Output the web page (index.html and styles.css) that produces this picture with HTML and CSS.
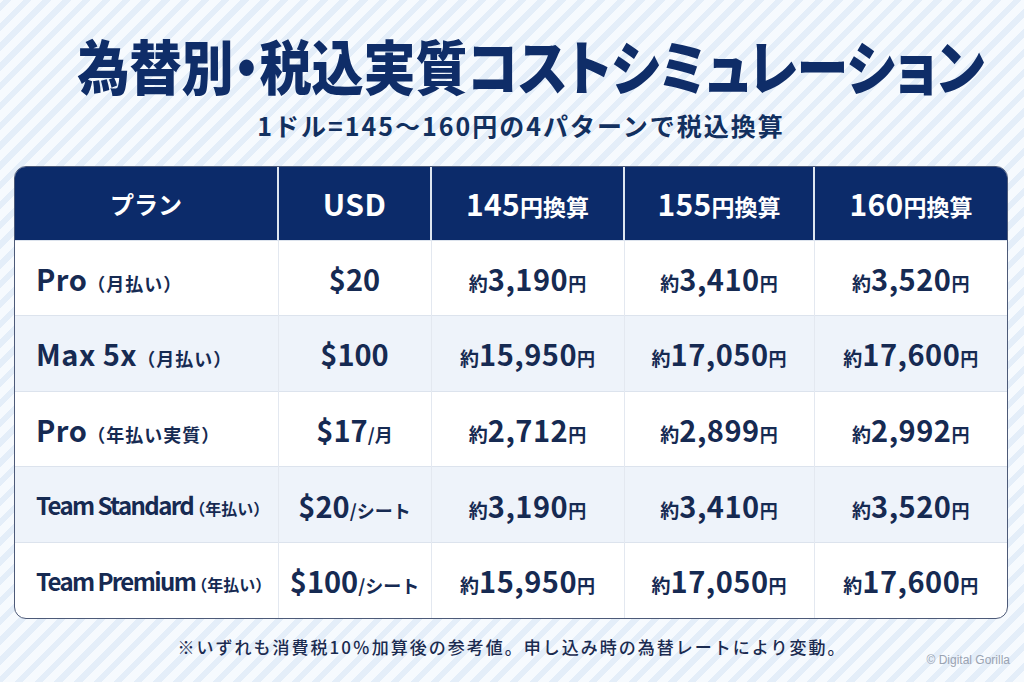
FILE: index.html
```html
<!DOCTYPE html>
<html lang="ja">
<head>
<meta charset="utf-8">
<title>為替別・税込実質コストシミュレーション</title>
<link rel="stylesheet" href="styles.css">
</head>
<body>
<div class="page">
  <header class="head">
    <h1 class="title">為替別・税込実質コストシミュレーション</h1>
    <p class="subtitle">1ドル=145〜160円の4パターンで税込換算</p>
  </header>
  <div class="table-wrap">
    <table class="sim">
      <colgroup>
        <col class="c-plan"><col class="c-usd"><col class="c-145"><col class="c-155"><col class="c-160">
      </colgroup>
      <thead>
        <tr>
          <th class="plan-h">プラン</th>
          <th class="usd-h">USD</th>
          <th><span class="hn">145</span><span class="hj">円換算</span></th>
          <th><span class="hn">155</span><span class="hj">円換算</span></th>
          <th><span class="hn">160</span><span class="hj">円換算</span></th>
        </tr>
      </thead>
      <tbody>
        <tr>
          <td class="plan"><span class="pn">Pro</span><span class="pj">（月払い）</span></td>
          <td class="usd">$20</td>
          <td class="yen"><span class="ya">約</span><span class="yn">3,190</span><span class="yy">円</span></td>
          <td class="yen"><span class="ya">約</span><span class="yn">3,410</span><span class="yy">円</span></td>
          <td class="yen"><span class="ya">約</span><span class="yn">3,520</span><span class="yy">円</span></td>
        </tr>
        <tr class="alt">
          <td class="plan"><span class="pn">Max 5x</span><span class="pj">（月払い）</span></td>
          <td class="usd">$100</td>
          <td class="yen"><span class="ya">約</span><span class="yn">15,950</span><span class="yy">円</span></td>
          <td class="yen"><span class="ya">約</span><span class="yn">17,050</span><span class="yy">円</span></td>
          <td class="yen"><span class="ya">約</span><span class="yn">17,600</span><span class="yy">円</span></td>
        </tr>
        <tr>
          <td class="plan"><span class="pn">Pro</span><span class="pj">（年払い実質）</span></td>
          <td class="usd">$17<span class="us">/月</span></td>
          <td class="yen"><span class="ya">約</span><span class="yn">2,712</span><span class="yy">円</span></td>
          <td class="yen"><span class="ya">約</span><span class="yn">2,899</span><span class="yy">円</span></td>
          <td class="yen"><span class="ya">約</span><span class="yn">2,992</span><span class="yy">円</span></td>
        </tr>
        <tr class="alt">
          <td class="plan"><span class="pn team">Team Standard</span><span class="pj tj">（年払い）</span></td>
          <td class="usd">$20<span class="us">/シート</span></td>
          <td class="yen"><span class="ya">約</span><span class="yn">3,190</span><span class="yy">円</span></td>
          <td class="yen"><span class="ya">約</span><span class="yn">3,410</span><span class="yy">円</span></td>
          <td class="yen"><span class="ya">約</span><span class="yn">3,520</span><span class="yy">円</span></td>
        </tr>
        <tr>
          <td class="plan"><span class="pn team">Team Premium</span><span class="pj tj">（年払い）</span></td>
          <td class="usd">$100<span class="us">/シート</span></td>
          <td class="yen"><span class="ya">約</span><span class="yn">15,950</span><span class="yy">円</span></td>
          <td class="yen"><span class="ya">約</span><span class="yn">17,050</span><span class="yy">円</span></td>
          <td class="yen"><span class="ya">約</span><span class="yn">17,600</span><span class="yy">円</span></td>
        </tr>
      </tbody>
    </table>
  </div>
  <footer class="foot">
    <span></span>
    <p class="note">※いずれも消費税10％加算後の参考値。申し込み時の為替レートにより変動。</p>
    <span class="credit">© Digital Gorilla</span>
  </footer>
</div>
</body>
</html>
```

FILE: styles.css
```css
* { box-sizing: border-box; }
html, body { margin: 0; padding: 0; }
body {
  width: 1024px;
  height: 682px;
  overflow: hidden;
  font-family: "Noto Sans CJK JP", "Noto Sans", sans-serif;
  color: #162a52;
  background-color: #f3f8fd;
  background-image: repeating-linear-gradient(-45deg,
    #f6fafe 0px, #f6fafe 8px,
    #e4eef9 8px, #e4eef9 14px);
}
.page {
  display: flex;
  flex-direction: column;
  height: 682px;
}
.head {
  display: flex;
  flex-direction: column;
  align-items: center;
  padding-top: 34px;
}
.title {
  margin: 0 0 0 38px;
  font-size: 52px;
  line-height: 62px;
  font-weight: 900;
  color: #0f2d68;
  font-feature-settings: "palt";
  letter-spacing: 0px;
  white-space: nowrap;
  transform: scaleY(1.14);
}
.subtitle {
  margin: 13px 0 0 18px;
  font-size: 25px;
  line-height: 32px;
  font-weight: 700;
  color: #12305f;
  letter-spacing: 2px;
  white-space: nowrap;
}
.table-wrap {
  margin: 25px 16px 0 14px;
  border: 1.5px solid #4d5a78;
  border-radius: 12px;
  overflow: hidden;
  background: #fff;
}
.sim {
  width: 100%;
  border-collapse: collapse;
  table-layout: fixed;
}
.c-plan { width: 263px; }
.c-usd { width: 153px; }
.c-145 { width: 193px; }
.c-155 { width: 190px; }
.c-160 { width: auto; }
.sim thead th {
  height: 73px;
  background: #0c2b6a;
  color: #fff;
  font-weight: 700;
  font-size: 23px;
  text-align: center;
  border-left: 2px solid #dfe6f0;
  padding: 0;
  white-space: nowrap;
}
.sim thead th:first-child { border-left: none; }
.sim thead th.plan-h { font-size: 24px; }
.sim thead th.usd-h { font-size: 30px; letter-spacing: 0.5px; }
.hn { font-size: 30px; letter-spacing: 0.3px; }
.hj { font-size: 23px; }
.sim tbody td {
  height: 75.6px;
  padding: 0;
  text-align: center;
  border-left: 1px solid #e3e8f0;
  border-top: 1px solid #dce3ed;
  color: #162a52;
  font-weight: 700;
  white-space: nowrap;
}
.sim tbody td:first-child { border-left: none; }
.sim tbody tr.alt td { background: #eef3fa; }
.sim tbody td.plan {
  text-align: left;
  padding-left: 21px;
}
.pn { font-size: 29px; letter-spacing: 0.5px; }
.pn.team { font-size: 24px; letter-spacing: -1.6px; }
.pj { font-size: 18px; letter-spacing: 1px; }
.pj.tj { font-size: 16px; letter-spacing: 0; margin-left: -4px; }
.usd { font-size: 29px; }
.us { font-size: 18px; }
.ya { font-size: 19px; }
.yn { font-size: 29px; letter-spacing: 0.5px; }
.yy { font-size: 18px; }
.foot {
  display: grid;
  grid-template-columns: 1fr auto 1fr;
  align-items: end;
  padding: 16px 14px 0;
}
.note {
  margin: 0;
  font-size: 17px;
  line-height: 24px;
  font-weight: 500;
  letter-spacing: 2px;
  color: #1b2b50;
}
.credit {
  justify-self: end;
  font-family: "Liberation Sans", "Noto Sans", sans-serif;
  font-size: 12px;
  color: #9aa3b2;
  position: relative;
  top: 8px;
}
```
